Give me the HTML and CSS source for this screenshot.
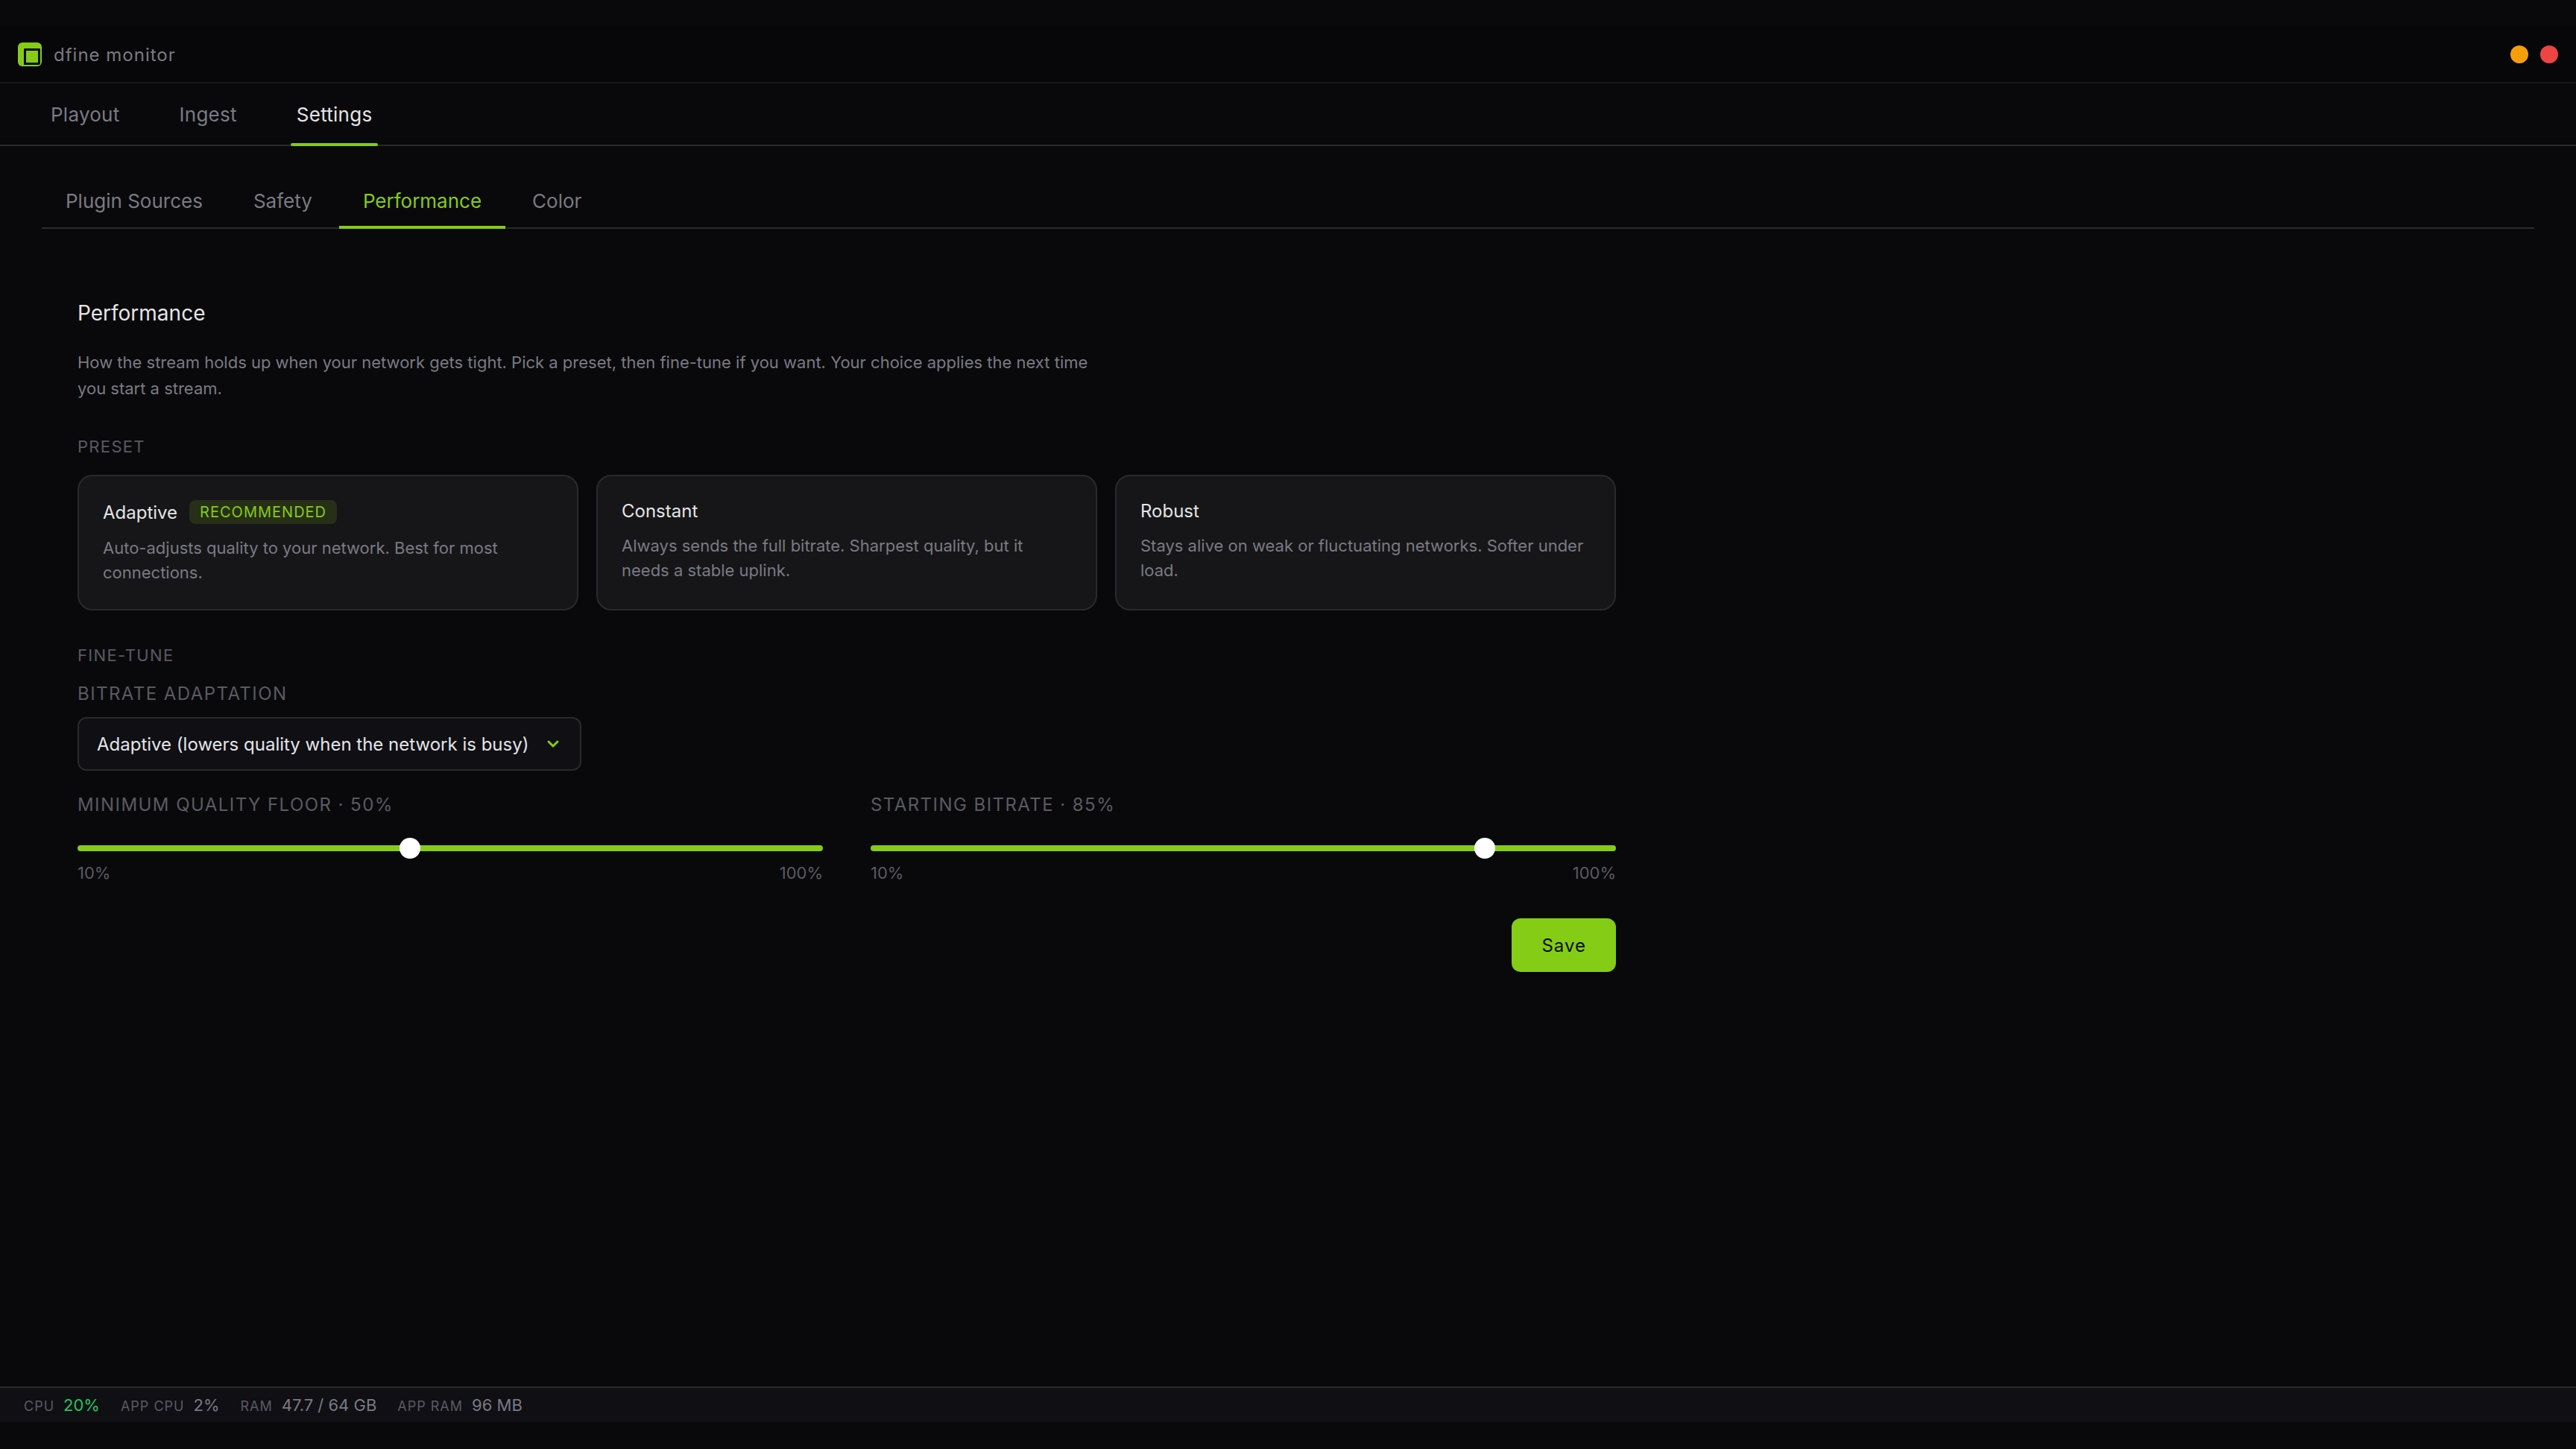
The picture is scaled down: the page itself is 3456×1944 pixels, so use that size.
FILE: index.html
```html
<!DOCTYPE html>
<html lang="en">
<head>
<meta charset="utf-8">
<title>dfine monitor</title>
<link rel="stylesheet" href="styles.css">
</head>
<body>
<div class="app">
  <header class="titlebar">
    <div class="brand">
      <svg class="logo" viewBox="0 0 32 32" aria-hidden="true">
        <rect width="32" height="32" rx="6" fill="#84cc16"/>
        <path d="M9 8h20a1 1 0 0 1 1 1v19a2 2 0 0 1-2 2H8V9a1 1 0 0 1 1-1z M11 11v16h16V11z" fill="#08080a" fill-rule="evenodd"/>
      </svg>
      <span class="brand-name">dfine monitor</span>
    </div>
    <div class="window-controls">
      <button class="dot dot-min" type="button" aria-label="Minimize"></button>
      <button class="dot dot-close" type="button" aria-label="Close"></button>
    </div>
  </header>
  <nav class="tabs">
    <a class="tab" href="#playout">Playout</a>
    <a class="tab" href="#ingest">Ingest</a>
    <a class="tab tab-active" href="#settings">Settings</a>
  </nav>
  <main class="main">
    <nav class="subtabs">
      <a class="subtab" href="#plugins">Plugin Sources</a>
      <a class="subtab" href="#safety">Safety</a>
      <a class="subtab subtab-active" href="#performance">Performance</a>
      <a class="subtab" href="#color">Color</a>
    </nav>
    <form class="panel">
      <h1 class="heading">Performance</h1>
      <p class="intro">How the stream holds up when your network gets tight. Pick a preset, then fine-tune if you want. Your choice applies the next time you start a stream.</p>
      <h2 class="section">PRESET</h2>
      <div class="presets">
        <button class="card" type="button">
          <span class="card-title">Adaptive <span class="badge">RECOMMENDED</span></span>
          <span class="card-text">Auto-adjusts quality to your network. Best for most connections.</span>
        </button>
        <button class="card" type="button">
          <span class="card-title">Constant</span>
          <span class="card-text">Always sends the full bitrate. Sharpest quality, but it needs a stable uplink.</span>
        </button>
        <button class="card" type="button">
          <span class="card-title">Robust</span>
          <span class="card-text">Stays alive on weak or fluctuating networks. Softer under load.</span>
        </button>
      </div>
      <h2 class="section section-tune">FINE-TUNE</h2>
      <label class="label" for="adaptation">BITRATE ADAPTATION</label>
      <div class="select-wrap">
        <select class="select" id="adaptation">
          <option>Adaptive (lowers quality when the network is busy)</option>
        </select>
        <svg class="chevron" viewBox="0 0 24 24" aria-hidden="true"><path d="M6 9l6 6 6-6" fill="none" stroke="#84cc16" stroke-width="3" stroke-linecap="round" stroke-linejoin="round"/></svg>
      </div>
      <div class="sliders">
        <div class="field">
          <label class="label" for="floor">MINIMUM QUALITY FLOOR · 50%</label>
          <input class="range" id="floor" type="range" min="10" max="100" value="50">
          <div class="scale"><span>10%</span><span>100%</span></div>
        </div>
        <div class="field">
          <label class="label" for="start">STARTING BITRATE · 85%</label>
          <input class="range" id="start" type="range" min="10" max="100" value="85">
          <div class="scale"><span>10%</span><span>100%</span></div>
        </div>
      </div>
      <div class="actions"><button class="save" type="submit">Save</button></div>
    </form>
  </main>
  <footer class="status">
    <span class="stat"><span class="stat-name">CPU</span><span class="stat-value stat-good">20%</span></span>
    <span class="stat"><span class="stat-name">APP CPU</span><span class="stat-value">2%</span></span>
    <span class="stat"><span class="stat-name">RAM</span><span class="stat-value">47.7 / 64 GB</span></span>
    <span class="stat"><span class="stat-name">APP RAM</span><span class="stat-value">96 MB</span></span>
  </footer>
</div>
</body>
</html>
```
FILE: styles.css
```css
* {
  box-sizing: border-box;
}

body {
  margin: 0;
  background: #09090b;
  color: #e4e4e7;
  font-family: Inter, "Liberation Sans", sans-serif;
  font-size: 24px;
}

button,
select,
input {
  margin: 0;
  font: inherit;
}

a {
  color: inherit;
  text-decoration: none;
}

.app {
  display: flex;
  flex-direction: column;
  min-height: 100vh;
  padding: 36px 0;
}

.titlebar {
  display: flex;
  justify-content: space-between;
  align-items: center;
  height: 76px;
  padding: 0 24px;
  background: #070709;
  border-bottom: 2px solid #18181b;
}

.brand {
  display: flex;
  align-items: center;
  gap: 16px;
}

.logo {
  width: 32px;
  height: 32px;
}

.brand-name {
  color: #7a7a83;
  letter-spacing: 1px;
}

.window-controls {
  display: flex;
  gap: 16px;
}

.dot {
  width: 24px;
  height: 24px;
  padding: 0;
  border: 0;
  border-radius: 50%;
}

.dot-min {
  background: #f59e0b;
}

.dot-close {
  background: #ef4444;
}

.tabs {
  display: flex;
  gap: 64px;
  height: 84px;
  padding: 0 60px;
  border-bottom: 2px solid #2a2a2e;
}

.tab {
  position: relative;
  padding: 0 8px;
  color: #7a7a83;
  font-size: 26px;
  letter-spacing: 0.01em;
  line-height: 84px;
}

.tab-active {
  color: #e4e4e7;
}

.tab-active::after {
  content: "";
  position: absolute;
  right: 0;
  bottom: -2px;
  left: 0;
  height: 4px;
  border-radius: 2px;
  background: #84cc16;
}

.main {
  flex: 1;
  padding: 40px 56px;
}

.subtabs {
  display: flex;
  gap: 4px;
  height: 71px;
  border-bottom: 2px solid #2a2a2e;
}

.subtab {
  height: 71px;
  padding: 0 32px;
  color: #7a7a83;
  font-size: 26px;
  line-height: 68px;
}

.subtab-active {
  border-bottom: 4px solid #84cc16;
  color: #84cc16;
}

.panel {
  max-width: 2160px;
  padding: 96px 48px 0;
}

.heading {
  margin: 0;
  font-size: 28px;
  font-weight: 400;
  line-height: 34px;
}

.intro {
  max-width: 1380px;
  margin: 32px 0 0;
  color: #7a7a83;
  font-size: 22px;
  line-height: 35px;
}

.section {
  margin: 46px 0 0;
  color: #5a5a62;
  font-size: 22px;
  font-weight: 400;
  letter-spacing: 0.06em;
  line-height: 28px;
}

.section-tune {
  margin-bottom: 24px;
}

.presets {
  display: grid;
  grid-template-columns: repeat(3, 1fr);
  gap: 24px;
  margin-top: 24px;
}

.card {
  display: flex;
  flex-direction: column;
  justify-content: flex-start;
  gap: 16px;
  padding: 32px;
  border: 2px solid #2a2a2e;
  border-radius: 20px;
  background: #161618;
  text-align: left;
}

.card-title {
  display: flex;
  align-items: center;
  gap: 16px;
  color: #e4e4e7;
  line-height: 29px;
}

.badge {
  padding: 0 14px;
  border-radius: 8px;
  background: #272f18;
  color: #84cc16;
  font-size: 20px;
  letter-spacing: 1px;
  line-height: 32px;
}

.card-text {
  color: #7a7a83;
  font-size: 22px;
  line-height: 33px;
}

.label {
  display: block;
  color: #5a5a62;
  letter-spacing: 0.06em;
  line-height: 28px;
}

.select-wrap {
  position: relative;
  width: 676px;
  margin-top: 17px;
}

.select {
  display: block;
  width: 100%;
  height: 72px;
  padding: 0 24px;
  border: 2px solid #2a2a2e;
  border-radius: 12px;
  background: #0f0f14;
  color: #e4e4e7;
  appearance: none;
}

.chevron {
  position: absolute;
  top: 24px;
  right: 26px;
  width: 24px;
  height: 24px;
  pointer-events: none;
}

.sliders {
  display: grid;
  grid-template-columns: 1fr 1fr;
  gap: 64px;
  margin-top: 32px;
}

.range {
  display: block;
  width: 100%;
  height: 28px;
  margin-top: 30px;
  background: transparent;
  appearance: none;
}

.range::-webkit-slider-runnable-track {
  height: 8px;
  border-radius: 4px;
  background: #84cc16;
}

.range::-webkit-slider-thumb {
  width: 28px;
  height: 28px;
  margin-top: -10px;
  border-radius: 50%;
  background: #ffffff;
  appearance: none;
}

.scale {
  display: flex;
  justify-content: space-between;
  margin-top: 4px;
  color: #5a5a62;
  font-size: 22px;
  line-height: 30px;
}

.actions {
  display: flex;
  justify-content: flex-end;
  margin-top: 46px;
}

.save {
  height: 72px;
  padding: 0 40px;
  border: 0;
  border-radius: 12px;
  background: #84cc16;
  color: #0a0a0c;
  letter-spacing: 1px;
}

.status {
  display: flex;
  align-items: center;
  gap: 28px;
  height: 48px;
  padding: 0 32px;
  border-top: 2px solid #2a2a2e;
  background: #0f0f14;
}

.stat {
  display: flex;
  align-items: baseline;
  gap: 12px;
}

.stat-name {
  color: #5a5a62;
  font-size: 18px;
  letter-spacing: 1px;
}

.stat-value {
  color: #7a7a83;
  font-size: 22px;
}

.stat-good {
  color: #22c55e;
}
```
